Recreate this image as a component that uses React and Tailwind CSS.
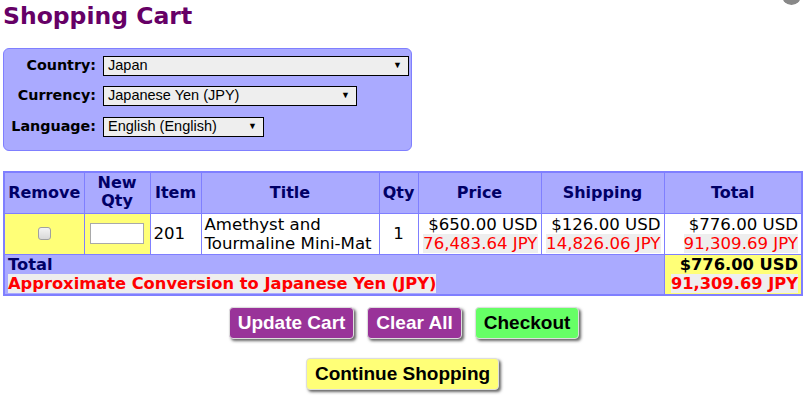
import React from 'react';

const verdana = { fontFamily: '"DejaVu Sans", Verdana, sans-serif' };

function FakeSelect({ value, width }) {
  return (
    <div
      className={`flex items-center justify-between h-[20px] border border-black bg-[#eeeeee] pl-[4px] pr-[6px] text-[14.5px] text-black font-['Liberation_Sans',Arial,sans-serif] ${width}`}
    >
      <span>{value}</span>
      <span className="text-[9px]">▼</span>
    </div>
  );
}

function Money({ usd, jpy, bold }) {
  return (
    <div className={`flex flex-col items-end leading-[19px] ${bold ? 'font-bold' : ''}`}>
      <span className="text-black">{usd}</span>
      <span className="text-[#ff0000] bg-[#eeeeee]">{jpy}</span>
    </div>
  );
}

export default function App() {
  const th = 'border border-[#7f7fff] bg-[#aaaaff] text-[#000066] font-bold text-[16px] leading-[19px] text-center px-[1px]';
  const td = 'border border-[#7f7fff] px-[3px] text-[16.6px] leading-[19px]';
  const label = 'w-[92px] text-right text-[14.3px] font-bold text-black';

  return (
    <div className="relative w-[805px] h-[397px] overflow-hidden bg-white" style={verdana}>
      <div className="absolute right-[4px] top-[-14px] w-[19px] h-[19px] rounded-full bg-[#888888]" />

      <h1 className="pl-[3px] pt-[1px] text-[23.5px] leading-[30px] font-bold text-[#660066]">Shopping Cart</h1>

      <div className="ml-[3px] mt-[17px] w-[409px] h-[103px] rounded-[6px] border border-[#7f7fff] bg-[#aaaaff] pt-[6px]">
        <div className="flex flex-col gap-[9px]">
          <div className="flex items-center gap-[7px]">
            <div className={label}>Country:</div>
            <FakeSelect value="Japan" width="w-[306px]" />
          </div>
          <div className="flex items-center gap-[7px]">
            <div className={label}>Currency:</div>
            <FakeSelect value="Japanese Yen (JPY)" width="w-[254px]" />
          </div>
          <div className="flex items-center gap-[7px]">
            <div className={label}>Language:</div>
            <FakeSelect value="English (English)" width="w-[161px]" />
          </div>
        </div>
      </div>

      <table className="ml-[3px] mt-[20px] w-[798px] border-collapse border-2 border-[#7f7fff] table-fixed">
        <colgroup>
          <col className="w-[80px]" />
          <col className="w-[66px]" />
          <col className="w-[51px]" />
          <col className="w-[178px]" />
          <col className="w-[39px]" />
          <col className="w-[123px]" />
          <col className="w-[123px]" />
          <col className="w-[138px]" />
        </colgroup>
        <thead>
          <tr className="h-[41px]">
            <th className={th}>Remove</th>
            <th className={th}>
              <div className="leading-[16px]">New</div>
              <div className="leading-[19px]">Qty</div>
            </th>
            <th className={th}>Item</th>
            <th className={th}>Title</th>
            <th className={th}>Qty</th>
            <th className={th}>Price</th>
            <th className={th}>Shipping</th>
            <th className={th}>Total</th>
          </tr>
        </thead>
        <tbody>
          <tr className="h-[41px]">
            <td className={`${td} bg-[#ffff77] text-center`}>
              <div className="mx-auto w-[13px] h-[13px] rounded-[3px] border border-[#a0a0a0] bg-gradient-to-b from-[#f4f4f4] to-[#d8d8d8]" />
            </td>
            <td className={`${td} bg-[#ffff77]`}>
              <div className="mx-auto w-[54px] h-[21px] border border-[#a9a9a9] bg-white" />
            </td>
            <td className={`${td} bg-white text-black`}>201</td>
            <td className={`${td} bg-white text-black`}>Amethyst and<br />Tourmaline Mini-Mat</td>
            <td className={`${td} bg-white text-black text-center`}>1</td>
            <td className={`${td} bg-white`}><Money usd="$650.00 USD" jpy="76,483.64 JPY" /></td>
            <td className={`${td} bg-white`}><Money usd="$126.00 USD" jpy="14,826.06 JPY" /></td>
            <td className={`${td} bg-white`}><Money usd="$776.00 USD" jpy="91,309.69 JPY" /></td>
          </tr>
          <tr className="h-[41px]">
            <td colSpan={7} className="border border-[#7f7fff] bg-[#aaaaff] px-[3px] text-[16.3px] leading-[19px] font-bold">
              <div className="text-[#000066]">Total</div>
              <span className="text-[#ff0000] bg-[#eeeeee]">Approximate Conversion to Japanese Yen (JPY)</span>
            </td>
            <td className="border border-[#7f7fff] bg-[#ffff77] px-[3px] text-[16.3px] leading-[19px]">
              <Money usd="$776.00 USD" jpy="91,309.69 JPY" bold />
            </td>
          </tr>
        </tbody>
      </table>

      <div className="mt-[11px] flex flex-col items-center gap-[19px] font-['Liberation_Sans',Arial,sans-serif] font-bold text-[19px]">
        <div className="flex gap-[13px] pl-[3px]">
          <button className="h-[32px] px-[8px] rounded-[4px] border border-[#dddddd] bg-[#993399] text-white shadow-[2px_2px_3px_#666666]">Update Cart</button>
          <button className="h-[32px] px-[8px] rounded-[4px] border border-[#dddddd] bg-[#993399] text-white shadow-[2px_2px_3px_#666666]">Clear All</button>
          <button className="h-[32px] px-[8px] rounded-[4px] border border-[#dddddd] bg-[#66ff66] text-black shadow-[2px_2px_3px_#666666]">Checkout</button>
        </div>
        <button className="h-[32px] px-[8px] rounded-[4px] border border-[#dddddd] bg-[#ffff77] text-black shadow-[2px_2px_3px_#666666]">Continue Shopping</button>
      </div>
    </div>
  );
}
